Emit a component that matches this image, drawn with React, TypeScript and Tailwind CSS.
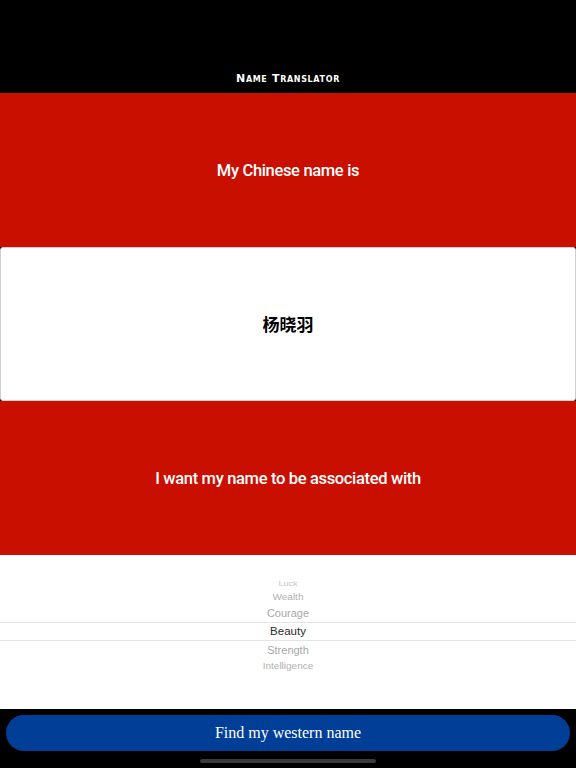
import { useState } from "react";

const options = [
  { label: "Luck", row: "h-[12px]", text: "text-[9px] text-[#c4c4c4] scale-y-[0.7]" },
  { label: "Wealth", row: "h-[14px]", text: "text-[10px] text-[#b0b0b0] scale-y-[0.88]" },
  { label: "Courage", row: "h-[18px]", text: "text-[11px] text-[#a8a8a8] scale-y-[0.96]" },
  { label: "Beauty", row: "h-[19px]", text: "text-[11.5px] text-[#2b2b2b]" },
  { label: "Strength", row: "h-[18px]", text: "text-[11px] text-[#a8a8a8] scale-y-[0.96]" },
  { label: "Intelligence", row: "h-[14px]", text: "text-[10px] text-[#b0b0b0] scale-y-[0.88]" },
];

export default function App() {
  const [name] = useState("杨晓羽");
  const [selected] = useState("Beauty");

  return (
    <main className="w-[576px] h-[768px] flex flex-col bg-black overflow-hidden">
      {/* nav bar */}
      <div className="h-[93px] flex items-end justify-center pb-[9px]">
        <h1 className="text-white text-[11px] font-bold tracking-[0.06em] [font-variant:small-caps] [font-family:'DejaVu_Sans',sans-serif] leading-none">
          Name Translator
        </h1>
      </div>

      {/* question 1 */}
      <div className="h-[154px] bg-[#c80f00] flex items-center justify-center pt-[3px]">
        <p className="text-white text-[16.5px] font-medium [font-family:'Roboto',sans-serif] tracking-[-0.02em]">
          My Chinese name is
        </p>
      </div>

      {/* name input */}
      <div className="h-[154px] bg-white border border-[#cfcfcf] rounded-[3px] flex items-center justify-center">
        <span className="text-black text-[17px] font-bold [font-family:'Noto_Sans_CJK_SC',sans-serif]">
          {name}
        </span>
      </div>

      {/* question 2 */}
      <div className="h-[154px] bg-[#c80f00] flex items-center justify-center pt-[3px]">
        <p className="text-white text-[16.5px] font-medium [font-family:'Roboto',sans-serif] tracking-[-0.02em]">
          I want my name to be associated with
        </p>
      </div>

      {/* wheel picker */}
      <div className="h-[154px] bg-white flex flex-col pt-[23px] [font-family:'Liberation_Sans',sans-serif]">
        {options.map((o) => (
          <div
            key={o.label}
            className={
              o.row +
              " flex items-center justify-center " +
              (o.label === selected ? "border-y border-[#e4e4e4]" : "")
            }
          >
            <span className={o.text + " leading-none inline-block"}>{o.label}</span>
          </div>
        ))}
      </div>

      {/* bottom button */}
      <div className="flex-1 flex flex-col items-center px-[6px] pt-[6px]">
        <button className="w-full h-[36px] rounded-[18px] bg-[#003e97] text-white text-[16px] [font-family:'Liberation_Serif',serif]">
          Find my western name
        </button>
        <div className="mt-[8px] w-[176px] h-[4px] rounded-full bg-[#3a3a3a]" />
      </div>
    </main>
  );
}
